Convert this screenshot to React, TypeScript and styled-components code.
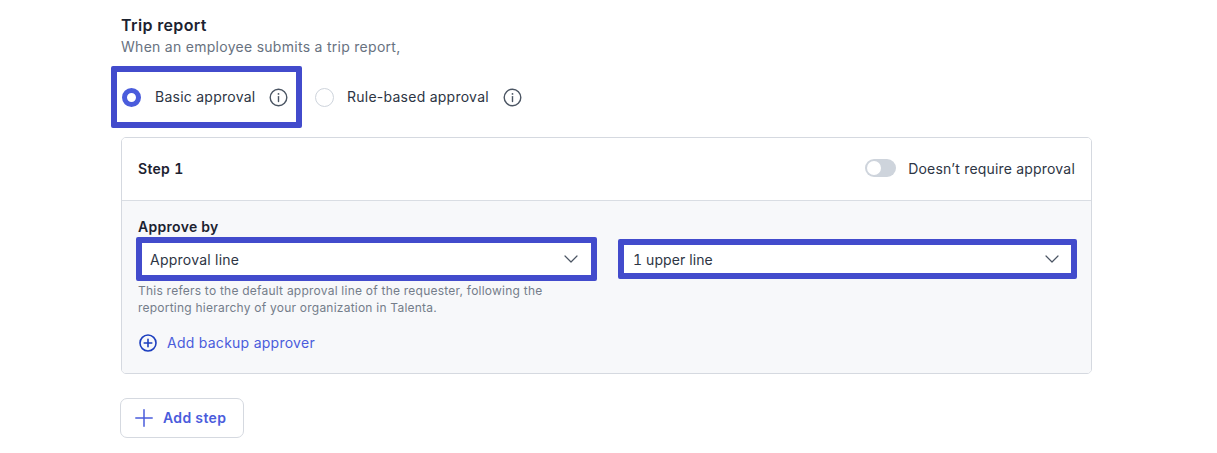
import styled, { createGlobalStyle } from 'styled-components';
import { ChevronDown } from 'lucide-react';

const GlobalStyle = createGlobalStyle`
  * { box-sizing: border-box; }
  html, body { margin: 0; padding: 0; background: #fff; }
  body {
    font-family: Inter, "Noto Sans", "Liberation Sans", sans-serif;
    color: #1f2937;
  }
`;

const Page = styled.div`
  width: 1217px;
  height: 453px;
  padding: 15px 125px 0 121px;
  overflow: hidden;
`;

const Title = styled.div`
  font-size: 16px;
  line-height: 20px;
  font-weight: 600;
  color: #1c2230;
  letter-spacing: 0.36px;
`;

const Subtitle = styled.div`
  margin-top: 3px;
  font-size: 14px;
  line-height: 18px;
  color: #68727f;
  letter-spacing: 0.28px;
`;

const RadioRow = styled.div`
  display: flex;
  align-items: center;
  margin: 10px 0 9px -10px;
  height: 62px;
`;

const Highlight = styled.div`
  display: flex;
  align-items: center;
  width: 191px;
  height: 62px;
  padding-left: 5px;
  border: 6px solid #424bcc;
  border-radius: 2px;
`;

const RadioOption = styled.div`
  display: flex;
  align-items: center;
  margin-left: 13px;
`;

const Radio = styled.span<{ $checked?: boolean }>`
  flex: none;
  width: 19px;
  height: 19px;
  border-radius: 50%;
  background: #fff;
  border: ${p => (p.$checked ? '5px solid #4a5cdc' : '1.5px solid #ced4dc')};
`;

const RadioLabel = styled.span<{ $tight?: boolean }>`
  margin-left: ${p => (p.$tight ? '13px' : '14px')};
  font-size: 14px;
  line-height: 20px;
  color: #2d3544;
  letter-spacing: 0.25px;
  white-space: nowrap;
`;

const InfoWrap = styled.span`
  display: flex;
  margin-left: 14px;
`;

const Card = styled.div`
  width: 971px;
  height: 237px;
  border: 1px solid #d5d9e0;
  border-radius: 5px;
  overflow: hidden;
`;

const CardHeader = styled.div`
  display: flex;
  align-items: center;
  justify-content: space-between;
  height: 63px;
  padding: 0 16px 2px 16px;
  border-bottom: 1px solid #d9dde3;
  background: #fff;
`;

const StepTitle = styled.div`
  font-size: 14px;
  font-weight: 600;
  font-feature-settings: "tnum";
  color: #1c2230;
  letter-spacing: 0.3px;
`;

const ToggleRow = styled.div`
  display: flex;
  align-items: center;
  gap: 12px;
  font-size: 14px;
  color: #2d3544;
  letter-spacing: 0.19px;
`;

const Toggle = styled.span`
  display: flex;
  align-items: center;
  width: 31px;
  height: 18px;
  padding-left: 2px;
  border-radius: 9px;
  background: #ced4dc;
`;

const ToggleKnob = styled.span`
  width: 14px;
  height: 14px;
  border-radius: 50%;
  background: #fff;
`;

const CardBody = styled.div`
  height: 172px;
  padding: 17px 14px 0;
  background: #f7f8fa;
`;

const FieldLabel = styled.div`
  margin-left: 2px;
  font-size: 14px;
  line-height: 18px;
  font-weight: 600;
  color: #1c2230;
  letter-spacing: 0.3px;
`;

const SelectGrid = styled.div`
  display: grid;
  grid-template-columns: 461px 459px;
  column-gap: 21px;
  align-items: start;
  margin-top: 1px;
`;

const SelectBox = styled.div<{ $compact?: boolean }>`
  display: flex;
  align-items: center;
  justify-content: space-between;
  height: ${p => (p.$compact ? '40px' : '44px')};
  margin-top: ${p => (p.$compact ? '2px' : '0')};
  padding: ${p => (p.$compact ? '0 7px 0 9px' : '0 8px 0 8px')};
  border: 6px solid #424bcc;
  border-radius: 2px;
  background: #fff;
  font-size: 14px;
  font-feature-settings: "tnum";
  color: #2d3544;
  letter-spacing: ${p => (p.$compact ? '0.1px' : '0.25px')};
`;

const HelpText = styled.div`
  width: 440px;
  margin: 1px 0 0 2px;
  font-size: 12px;
  line-height: 17px;
  color: #747d8a;
  letter-spacing: 0.23px;
`;

const BackupLink = styled.div`
  display: flex;
  align-items: center;
  gap: 10px;
  margin: 17px 0 0 3px;
  font-size: 14px;
  line-height: 20px;
  color: #4a5cdc;
  letter-spacing: 0.26px;
`;

const AddStep = styled.div`
  display: flex;
  align-items: center;
  gap: 10px;
  width: 124px;
  height: 40px;
  margin: 24px 0 0 -1px;
  padding: 0 0 1px 14px;
  border: 1px solid #d5d9e0;
  border-radius: 7px;
  background: #fff;
  font-size: 14px;
  font-weight: 600;
  color: #4a5cdc;
  letter-spacing: 0.35px;
`;

function InfoIcon() {
  return (
    <svg width="19" height="19" viewBox="0 0 19 19" fill="none">
      <circle cx="9.5" cy="9.5" r="8.3" stroke="#4b5563" strokeWidth="1.4" />
      <circle cx="9.5" cy="5.9" r="0.9" fill="#4b5563" />
      <path d="M9.5 8.6v5" stroke="#4b5563" strokeWidth="1.4" strokeLinecap="round" />
    </svg>
  );
}

function PlusCircle() {
  return (
    <svg width="18" height="18" viewBox="0 0 18 18" fill="none">
      <circle cx="9" cy="9" r="8" stroke="#1d3fbf" strokeWidth="1.6" />
      <path d="M9 5.2v7.6M5.2 9h7.6" stroke="#1d3fbf" strokeWidth="1.6" strokeLinecap="round" />
    </svg>
  );
}

function PlusIcon() {
  return (
    <svg width="18" height="18" viewBox="0 0 18 18" fill="none">
      <path d="M9 .8v16.4M.8 9h16.4" stroke="#4a5cdc" strokeWidth="1.5" strokeLinecap="round" />
    </svg>
  );
}

export default function App() {
  return (
    <>
      <GlobalStyle />
      <Page>
        <Title>Trip report</Title>
        <Subtitle>When an employee submits a trip report,</Subtitle>
        <RadioRow>
          <Highlight>
            <Radio $checked />
            <RadioLabel>Basic approval</RadioLabel>
            <InfoWrap><InfoIcon /></InfoWrap>
          </Highlight>
          <RadioOption>
            <Radio />
            <RadioLabel $tight>Rule-based approval</RadioLabel>
            <InfoWrap><InfoIcon /></InfoWrap>
          </RadioOption>
        </RadioRow>
        <Card>
          <CardHeader>
            <StepTitle>Step 1</StepTitle>
            <ToggleRow>
              <Toggle><ToggleKnob /></Toggle>
              <span>Doesn’t require approval</span>
            </ToggleRow>
          </CardHeader>
          <CardBody>
            <FieldLabel>Approve by</FieldLabel>
            <SelectGrid>
              <div>
                <SelectBox>
                  Approval line
                  <ChevronDown size={24} strokeWidth={1.2} color="#4b5563" />
                </SelectBox>
                <HelpText>
                  This refers to the default approval line of the requester, following the reporting hierarchy of your organization in Talenta.
                </HelpText>
              </div>
              <SelectBox $compact>
                1 upper line
                <ChevronDown size={24} strokeWidth={1.2} color="#4b5563" />
              </SelectBox>
            </SelectGrid>
            <BackupLink>
              <PlusCircle />
              Add backup approver
            </BackupLink>
          </CardBody>
        </Card>
        <AddStep>
          <PlusIcon />
          Add step
        </AddStep>
      </Page>
    </>
  );
}
